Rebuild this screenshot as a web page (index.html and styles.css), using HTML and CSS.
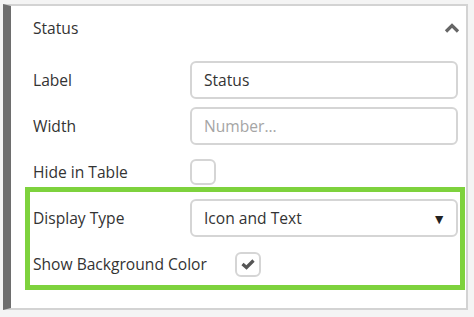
FILE: index.html
```html
<!DOCTYPE html>
<html lang="en">
<head>
  <meta charset="UTF-8">
  <title>Column Settings</title>
  <link rel="stylesheet" href="styles.css">
</head>
<body>

  <div class="panel">
    <div class="panel-header">
      <span class="panel-title">Status</span>
      <svg class="chevron" width="16" height="10" viewBox="0 0 16 10">
        <polyline points="2,8.5 8,2.5 14,8.5" fill="none" stroke="#666" stroke-width="3.2"/>
      </svg>
    </div>

    <div class="panel-body">
      <div class="field">
        <label for="colLabel">Label</label>
        <input type="text" id="colLabel" class="text-input" value="Status">
      </div>

      <div class="field">
        <label for="colWidth">Width</label>
        <input type="text" id="colWidth" class="text-input" placeholder="Number...">
      </div>

      <div class="field">
        <label>Hide in Table</label>
        <span class="checkbox"></span>
      </div>

      <!-- highlighted settings -->
      <div class="highlight">
        <div class="field">
          <label>Display Type</label>
          <div class="select-box">
            <span>Icon and Text</span>
            <span class="select-arrow">&#9660;</span>
          </div>
        </div>

        <div class="field">
          <label>Show Background Color</label>
          <span class="checkbox checked">
            <svg width="16" height="12" viewBox="0 0 16 12">
              <polyline points="2.5,6 6.5,9.5 13.5,2.5" fill="none" stroke="#555" stroke-width="3.2"/>
            </svg>
          </span>
        </div>
      </div>
    </div>
  </div>

</body>
</html>
```

FILE: styles.css
```css
body {
  margin: 0;
  background: #f4f4f4;
  font-family: "Open Sans", "Noto Sans", sans-serif;
  font-size: 15.6px;
  color: #333;
}

.panel {
  margin: 4px 6px 0 3px;
  height: 306px;
  box-sizing: border-box;
  background: #fff;
  border: 2px solid #d3d3d3;
  border-left: 8px solid #6e6e6e;
}

.panel-header {
  height: 44px;
  display: flex;
  align-items: center;
  justify-content: space-between;
  padding: 0 6px 0 22px;
}

.chevron {
  display: block;
}

.panel-body {
  padding: 7px 8px 0 22px;
}

.field {
  height: 46px;
  display: flex;
  align-items: center;
}

.field label {
  box-sizing: border-box;
  min-width: 157px;
  padding-right: 28px;
  white-space: nowrap;
}

.text-input {
  flex: 1;
  height: 38px;
  box-sizing: border-box;
  border: 2px solid #d5d5d5;
  border-radius: 6px;
  padding: 0 12px;
  font: inherit;
  color: #333;
  outline: none;
}

.text-input::placeholder {
  color: #a5a5a5;
}

.checkbox {
  width: 26px;
  height: 26px;
  box-sizing: border-box;
  border: 2px solid #d5d5d5;
  border-radius: 6px;
  display: flex;
  align-items: center;
  justify-content: center;
}

.checkbox.checked {
  height: 25px;
}

.select-box {
  flex: 1;
  height: 38px;
  box-sizing: border-box;
  border: 2px solid #d5d5d5;
  border-radius: 6px;
  padding: 0 10px 0 12px;
  display: flex;
  align-items: center;
  justify-content: space-between;
}

.select-arrow {
  font-size: 14px;
  color: #222;
}

/* Green highlight frame over the last two rows */
.highlight {
  position: relative;
}

.highlight::after {
  content: "";
  position: absolute;
  top: -8px;
  bottom: -3px;
  left: -8px;
  right: -7px;
  border: 5px solid #7ed23d;
  pointer-events: none;
}
```
